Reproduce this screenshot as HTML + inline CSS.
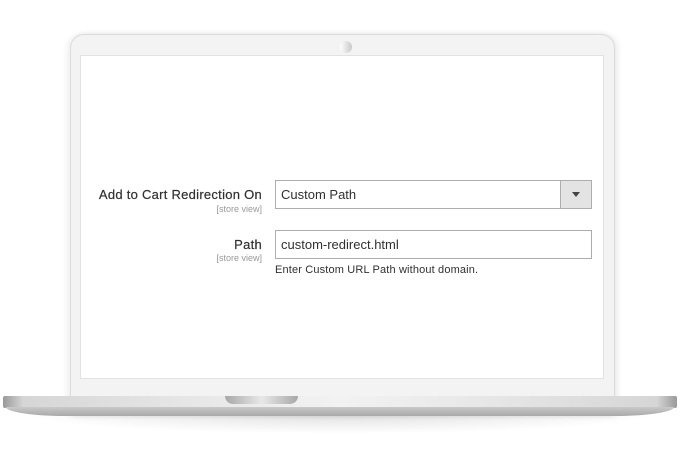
<!DOCTYPE html>
<html><head><style>
body{margin:0;width:680px;height:450px;background:#fff;position:relative;overflow:hidden;font-family:"Liberation Sans",sans-serif}
.lid{position:absolute;left:70px;top:34px;width:543px;height:380px;background:#f3f3f3;border:1px solid #dcdcdc;border-radius:14px 14px 0 0;box-shadow:3px 0 6px rgba(0,0,0,.08),-3px 0 6px rgba(0,0,0,.06)}
.cam{position:absolute;left:340px;top:41px;width:12px;height:12px;border-radius:50%;background:linear-gradient(90deg,#fff,#c8c8c8)}
.screen{position:absolute;left:80px;top:55px;width:522px;height:322px;background:#fff;border:1px solid #e2e2e2}
.base{position:absolute;left:3px;top:396px;width:674px;height:12px;background:linear-gradient(90deg,#999,#d6d6d6 3%,#e8e8e8 30%,#f2f2f2 50%,#e8e8e8 70%,#d6d6d6 97%,#999);border-radius:2px}
.base2{position:absolute;left:6px;top:407px;width:668px;height:9px;background:linear-gradient(#c9c9c9,#a9a9a9);border-radius:0 0 60px 60px/0 0 9px 9px}
.shadow{position:absolute;left:20px;top:414px;width:640px;height:20px;background:radial-gradient(ellipse at top,rgba(0,0,0,.12),rgba(0,0,0,0) 70%)}
.notch{position:absolute;left:225px;top:396px;width:73px;height:8px;background:linear-gradient(90deg,#a8a8a8,#e8e8e8 50%,#a8a8a8);border-radius:0 0 8px 8px}
.lbl{position:absolute;right:418px;text-align:right;color:#303030;font-size:13px;letter-spacing:.27px;-webkit-text-stroke:.2px #303030}
.sv{position:absolute;right:418px;color:#999;font-size:9px}
.field{position:absolute;left:275px;width:315px;height:27px;border:1px solid #adadad;background:#fff;font-size:13px;color:#303030;line-height:27px;padding-left:5px;box-sizing:content-box}
.btn{position:absolute;right:0;top:0;width:30px;height:27px;border-left:1px solid #adadad;background:#e3e3e3}
.btn:after{content:"";position:absolute;left:11px;top:11px;border:4px solid transparent;border-top:5px solid #444}
.help{position:absolute;left:275px;top:264px;font-size:11px;color:#303030;letter-spacing:.15px}
</style></head><body>
<div class="lid"></div>
<div class="cam"></div>
<div class="screen"></div>
<div class="shadow"></div>
<div class="base"></div>
<div class="base2"></div>
<div class="notch"></div>
<div class="lbl" style="top:187px">Add to Cart Redirection On</div>
<div class="sv" style="top:204px">[store view]</div>
<div class="field" style="top:180px;width:310px">Custom Path<div class="btn"></div></div>
<div class="lbl" style="top:237px">Path</div>
<div class="sv" style="top:253px">[store view]</div>
<div class="field" style="top:230px;width:310px">custom-redirect.html</div>
<div class="help">Enter Custom URL Path without domain.</div>
</body></html>
